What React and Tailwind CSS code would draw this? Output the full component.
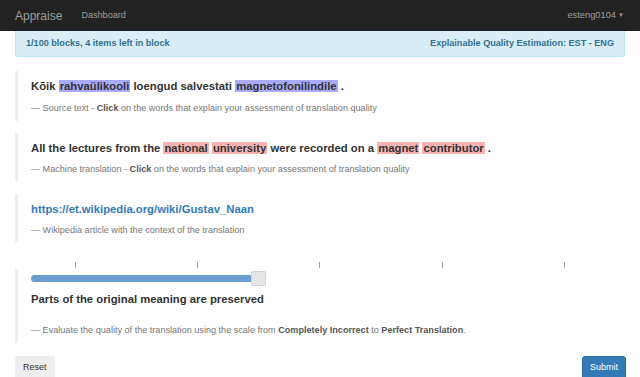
import React, { useState } from 'react';

const font = { fontFamily: '"Liberation Sans", Arial, sans-serif' };

const Mark = ({ color, children }) => (
  <span className={`${color} px-[1px]`}>{children}</span>
);

const Quote = ({ children, className = '' }) => (
  <div className={`border-l-[3px] border-[#eeeeee] pl-[13px] ${className}`}>{children}</div>
);

const Note = ({ children }) => (
  <p className="text-[9.1px] leading-[12px] text-[#777777]">{children}</p>
);

const App = () => {
  const [score] = useState(39);

  return (
    <div className="min-h-[377px] bg-white text-[#333333] overflow-hidden" style={font}>
      {/* Navbar */}
      <div className="h-[31px] bg-[#222222] flex items-center px-[15px] text-[#9d9d9d]">
        <span className="text-[12px]">Appraise</span>
        <span className="ml-[19px] text-[9.1px]">Dashboard</span>
        <span className="ml-auto mr-[1px] text-[9.3px] flex items-center gap-[2px]">
          esteng0104
          <span className="text-[6px]">▼</span>
        </span>
      </div>

      <div className="px-[15px]">
        {/* Status */}
        <div className="h-[26px] bg-[#d9edf7] border border-t-0 border-[#bce8f1] rounded-b-[3px] flex items-center justify-between pl-[10px] pr-[10px] text-[9.1px] font-bold text-[#31708f]">
          <span>1/100 blocks, 4 items left in block</span>
          <span>Explainable Quality Estimation: EST - ENG</span>
        </div>

        <Quote className="mt-[14px] pt-[7px] pb-[7px]">
          <p className="text-[11.3px] font-bold leading-[16px]">
            Kõik <Mark color="bg-[#aaaaff]">rahvaülikooli</Mark> loengud salvestati{' '}
            <Mark color="bg-[#aaaaff]">magnetofonilindile</Mark> .
          </p>
          <div className="mt-[8px]">
            <Note>
              — Source text - <b className="text-[#555555]">Click</b> on the words that explain your assessment of translation quality
            </Note>
          </div>
        </Quote>

        <Quote className="mt-[12px] pt-[7px] pb-[6px]">
          <p className="text-[11.3px] font-bold leading-[16px]">
            All the lectures from the <Mark color="bg-[#f7b3b3]">national</Mark>{' '}
            <Mark color="bg-[#f7b3b3]">university</Mark> were recorded on a{' '}
            <Mark color="bg-[#f7b3b3]">magnet</Mark> <Mark color="bg-[#f7b3b3]">contributor</Mark> .
          </p>
          <div className="mt-[7px]">
            <Note>
              — Machine translation - <b className="text-[#555555]">Click</b> on the words that explain your assessment of translation quality
            </Note>
          </div>
        </Quote>

        <Quote className="mt-[13px] pt-[7px] pb-[6px]">
          <p className="text-[11.3px] font-bold leading-[16px] text-[#337ab7]">
            https://et.wikipedia.org/wiki/Gustav_Naan
          </p>
          <div className="mt-[7px]">
            <Note>— Wikipedia article with the context of the translation</Note>
          </div>
        </Quote>

        {/* Scale ticks */}
        <div className="grid grid-cols-5 -mx-[1px] mt-[20px] h-[7px]">
          {[0, 1, 2, 3, 4].map((i) => (
            <div key={i} className="flex justify-center">
              <div className="w-[1px] h-[6px] bg-[#a0a0a0]" />
            </div>
          ))}
        </div>

        <Quote className="pt-[2px] pb-[7px]">
          <div className="relative h-[15px] mr-[12px]">
            <div className="absolute left-0 right-0 top-[4px] h-[7px] rounded-full bg-white" />
            <div
              className="absolute left-0 top-[4px] h-[7px] rounded-l-full bg-[#6b9fcf]"
              style={{ width: `${score}%` }}
            />
            <div
              className="absolute top-0 w-[15px] h-[15px] rounded-[2px] bg-[#e6e6e6] border border-[#c8d6e2]"
              style={{ left: `calc(${score}% - 7px)` }}
            />
          </div>
          <p className="mt-[5px] text-[11.3px] font-bold leading-[16px]">
            Parts of the original meaning are preserved
          </p>
          <div className="mt-[17px]">
            <Note>
              — Evaluate the quality of the translation using the scale from{' '}
              <b className="text-[#555555]">Completely Incorrect</b> to{' '}
              <b className="text-[#555555]">Perfect Translation</b>.
            </Note>
          </div>
        </Quote>

        <div className="mt-[13px] flex justify-between">
          <button className="h-[24px] px-[8px] rounded-[3px] bg-[#eeeeee] text-[9px] text-[#333333]">
            Reset
          </button>
          <button className="h-[24px] px-[7px] mr-[-1px] rounded-[3px] bg-[#337ab7] border border-[#2e6da4] text-[9px] text-white">
            Submit
          </button>
        </div>
      </div>
    </div>
  );
};

export default App;
